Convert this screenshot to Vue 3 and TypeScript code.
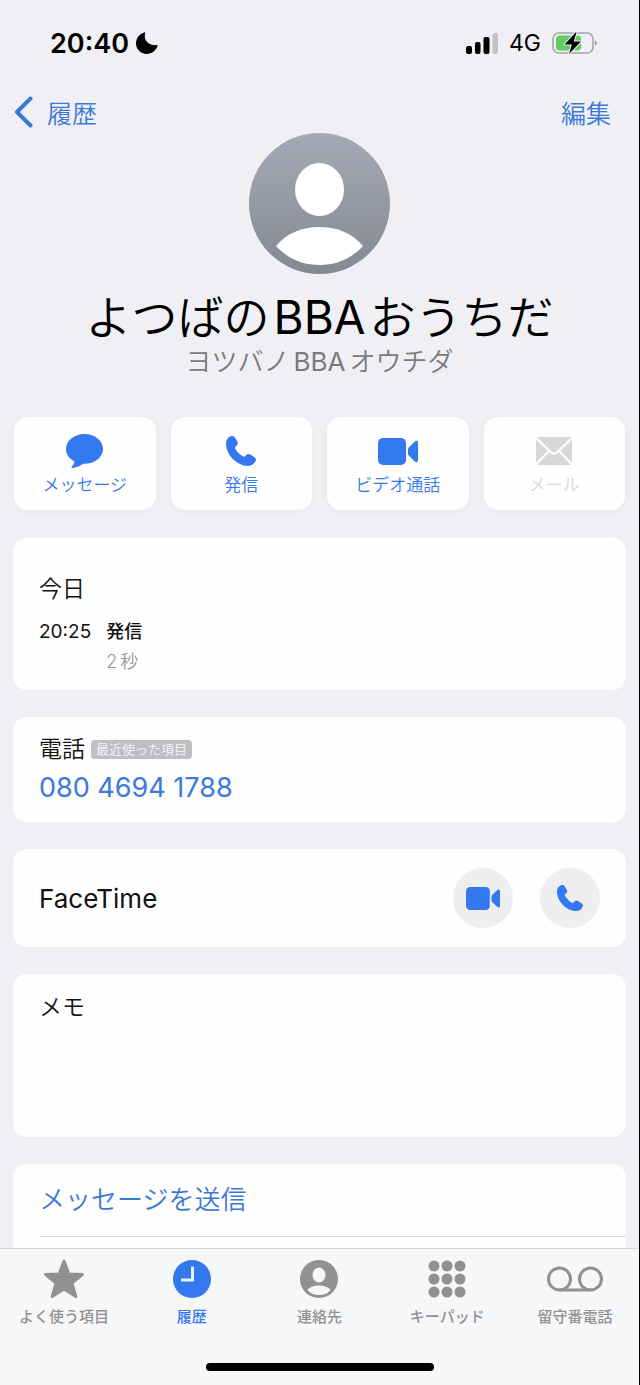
<script setup lang="ts">
import { ref } from 'vue'

type IconName = 'message' | 'phone' | 'video' | 'mail'
type TabName = 'star' | 'clock' | 'person' | 'keypad' | 'voicemail'

interface Action { icon: IconName; label: string; disabled?: boolean }
interface Tab { icon: TabName; label: string }

const actions: Action[] = [
  { icon: 'message', label: 'メッセージ' },
  { icon: 'phone', label: '発信' },
  { icon: 'video', label: 'ビデオ通話' },
  { icon: 'mail', label: 'メール', disabled: true },
]

const tabs: Tab[] = [
  { icon: 'star', label: 'よく使う項目' },
  { icon: 'clock', label: '履歴' },
  { icon: 'person', label: '連絡先' },
  { icon: 'keypad', label: 'キーパッド' },
  { icon: 'voicemail', label: '留守番電話' },
]

const activeTab = ref<TabName>('clock')
const memo = ref('')
const keypadDots = [6, 19, 32]
const phonePath =
  'M4.8.3C6.700-.4 8.300.4 9.200 2l2.100 3.400c.9 1.500.7 2.900-.4 3.900L9.700 10.400c-.8.7-.9 1.400-.4 2.400 1.600 2.900 4.400 5.700 7.400 7.500 1 .6 1.800.5 2.500-.3l1.100-1.100c1.100-1.100 2.500-1.200 4-.3l3.800 2.500c1.600 1 2.200 2.300 1.500 4C28.300 28.200 25.600 30 22.300 30 10 29.500 .2 18.500 0 7.700-.1 4.300 1.800 1.400 4.800.3Z'
const wingPath = 'M30 11.500c0-1 .4-1.700 1-2.300l5.500-5.500c1.500-1.400 3.500-1 3.500 1v17.600c0 2-2 2.400-3.500 1L31 17.800c-.6-.6-1-1.300-1-2.300Z'
</script>

<template>
  <div class="screen">
    <div class="status">
      <div class="status-left">
        <span class="time">20:40</span>
        <svg width="22" height="22" viewBox="0 0 22 22" aria-hidden="true">
          <path d="M8.300.4c.6-.2 1 .3.8.9C7.400 7.500 12 14.300 20.600 13c.8-.1 1.200.4.900 1.100C19.800 18.800 15.700 22 10.800 22 4.800 22 0 17.300 0 11.300 0 6.300 3.500 1.700 8.300.4Z" fill="#000" />
        </svg>
      </div>
      <div class="status-right">
        <svg width="32" height="21" viewBox="0 0 32 21" aria-hidden="true">
          <rect x="0" y="13" width="6" height="8" rx="2" />
          <rect x="9" y="9" width="5.500" height="12" rx="2" />
          <rect x="17.500" y="4" width="6" height="17" rx="2" />
          <rect x="26.500" y="0" width="5.500" height="21" rx="2" fill="#c3c3c6" />
        </svg>
        <span class="network">4G</span>
        <svg width="45" height="24" viewBox="0 0 45 24" aria-hidden="true">
          <rect x="1" y="2" width="40" height="20" rx="6" fill="none" stroke="#a2a2a6" stroke-width="1.500" />
          <path d="M43 9.500c2.200 1 2.200 4 0 5Z" fill="#929296" />
          <rect x="4" y="4.500" width="25" height="15" rx="3.500" fill="#62cb61" />
          <path d="M23.500 1.500 12.500 13.500h7.300L17 23 29 10.500h-7.300L24.500 1.500Z" fill="#000" stroke="#f1f1f4" stroke-width="2" paint-order="stroke" stroke-linejoin="round" />
        </svg>
      </div>
    </div>

    <main class="content">
      <header class="head">
        <button type="button" class="nav back">
          <svg width="19" height="32" viewBox="0 0 19 32" fill="none" aria-hidden="true">
            <path d="M16.500 2.500 3 16l13.500 13.500" stroke="#3b79d8" stroke-width="4" stroke-linecap="round" stroke-linejoin="round" />
          </svg>
          <span>履歴</span>
        </button>
        <svg class="avatar" width="141" height="141" viewBox="0 0 141 141" aria-hidden="true">
          <defs>
            <linearGradient id="avatar-fill" x1="0" y1="0" x2="0" y2="1">
              <stop offset="0" stop-color="#a4aab5" />
              <stop offset="1" stop-color="#848993" />
            </linearGradient>
          </defs>
          <circle cx="70.500" cy="70.500" r="70.500" fill="url(#avatar-fill)" />
          <ellipse cx="70.500" cy="56.500" rx="24.500" ry="26.500" fill="#fff" />
          <path d="M27 113C38 100 53 94 70.500 94S103 100 114 113C103 125 88 132 70.500 132S38 125 27 113Z" fill="#fff" />
        </svg>
        <button type="button" class="nav edit">編集</button>
      </header>

      <h1 class="name">よつばの<span class="latin">BBA</span>おうちだ</h1>
      <p class="reading">ヨツバノ<span class="latin">BBA</span>オウチダ</p>

      <div class="actions">
        <button v-for="a in actions" :key="a.icon" type="button" class="action" :disabled="a.disabled">
          <span class="action-icon">
            <svg v-if="a.icon === 'message'" width="37" height="34" viewBox="0 0 37 34">
              <path d="M18.500 0C28.700 0 37 6.700 37 15s-8.300 14.800-18.500 14.800h-1.200C14 32.200 10.300 33.600 6.600 34c-1.200.1-1.500-.8-.8-1.600 1.600-1.700 2.600-3.200 2.600-5C3.300 24.800 0 20.200 0 15 0 6.700 8.300 0 18.500 0Z" fill="currentColor" />
            </svg>
            <svg v-else-if="a.icon === 'phone'" width="30" height="30" viewBox="0 0 30 30">
              <path :d="phonePath" fill="currentColor" />
            </svg>
            <svg v-else-if="a.icon === 'video'" width="40" height="27" viewBox="0 0 40 27">
              <rect width="28" height="27" rx="5" fill="currentColor" />
              <path :d="wingPath" fill="currentColor" />
            </svg>
            <svg v-else width="36" height="28" viewBox="0 0 36 28">
              <rect width="36" height="28" rx="2" fill="currentColor" />
              <path d="m0 1 15 14.300c2 1.900 4 1.900 6 0L36 1M0 27.500 13 14M36 27.500 23 14" fill="none" stroke="#fff" stroke-width="2" />
            </svg>
          </span>
          <span>{{ a.label }}</span>
        </button>
      </div>

      <section class="card history">
        <h2 class="label">今日</h2>
        <dl class="calls">
          <dt>20:25</dt>
          <dd class="kind">発信</dd>
          <dd class="duration"><span class="count">2</span>秒</dd>
        </dl>
      </section>

      <section class="card phone">
        <div class="phone-label">
          <h2 class="label">電話</h2>
          <span class="badge">最近使った項目</span>
        </div>
        <a class="number" href="tel:08046941788">080 4694 1788</a>
      </section>

      <section class="card facetime">
        <h2 class="facetime-label">FaceTime</h2>
        <button type="button" class="round" aria-label="FaceTimeビデオ">
          <svg width="34" height="23" viewBox="0 0 40 27">
            <rect width="28" height="27" rx="5" fill="currentColor" />
            <path :d="wingPath" fill="currentColor" />
          </svg>
        </button>
        <button type="button" class="round" aria-label="FaceTimeオーディオ">
          <svg width="26" height="26" viewBox="0 0 30 30">
            <path :d="phonePath" fill="currentColor" />
          </svg>
        </button>
      </section>

      <section class="card memo">
        <label class="label" for="memo">メモ</label>
        <textarea id="memo" v-model="memo"></textarea>
      </section>

      <section class="card links">
        <a class="link" href="#message">メッセージを送信</a>
      </section>
    </main>

    <nav class="tabbar">
      <div class="tabs">
        <button
          v-for="t in tabs"
          :key="t.icon"
          type="button"
          class="tab"
          :class="{ active: t.icon === activeTab }"
          @click="activeTab = t.icon"
        >
          <span class="tab-icon">
            <svg v-if="t.icon === 'star'" width="42" height="40" viewBox="0 0 42 40">
              <path d="M21 2 25.900 15 39.500 15.500 28.900 24 32.800 37.500 21 30 9.200 37.500 13.100 24 2.500 15.500 16.100 15Z" fill="currentColor" stroke="currentColor" stroke-width="3" stroke-linejoin="round" />
            </svg>
            <svg v-else-if="t.icon === 'clock'" width="38" height="38" viewBox="0 0 38 38">
              <circle cx="19" cy="19" r="19" fill="currentColor" />
              <path d="M19.500 6.500v13.500H8" fill="none" stroke="#e8f2ff" stroke-width="3" />
            </svg>
            <svg v-else-if="t.icon === 'person'" width="38" height="38" viewBox="0 0 38 38">
              <circle cx="19" cy="19" r="19" fill="currentColor" />
              <ellipse cx="19" cy="15" rx="6.500" ry="7.500" fill="#f6f6f7" />
              <path d="M7.500 30C9.500 27 13.500 25.500 19 25.500s9.500 1.500 11.500 4.500C28 33.500 24 35 19 35S10 33.500 7.500 30Z" fill="#f6f6f7" />
            </svg>
            <svg v-else-if="t.icon === 'keypad'" width="38" height="38" viewBox="0 0 38 38">
              <template v-for="y in keypadDots" :key="y">
                <circle v-for="x in keypadDots" :key="x" :cx="x" :cy="y" r="5.500" fill="currentColor" />
              </template>
            </svg>
            <svg v-else width="56" height="26" viewBox="0 0 56 26" fill="none" stroke="currentColor" stroke-width="3">
              <circle cx="12.500" cy="13" r="11" />
              <circle cx="43.500" cy="13" r="11" />
              <path d="M12.500 24h31" />
            </svg>
          </span>
          <span>{{ t.label }}</span>
        </button>
      </div>
      <div class="home-indicator"></div>
    </nav>
  </div>
</template>

<style>
body {
  margin: 0;
}
</style>

<style scoped>
.screen {
  display: flex;
  flex-direction: column;
  box-sizing: border-box;
  height: 100vh;
  border-right: 1px solid #000;
  background: #f0f0f4;
  color: #111;
  font-family: Inter, "Noto Sans CJK JP", sans-serif;
}

button {
  margin: 0;
  padding: 0;
  border: 0;
  background: none;
  font: inherit;
  color: inherit;
}

h1,
h2,
p,
dl,
dd {
  margin: 0;
  font-weight: 400;
}

a {
  text-decoration: none;
}

svg {
  display: block;
  flex: none;
}

.status {
  display: flex;
  flex: none;
  align-items: center;
  justify-content: space-between;
  height: 86px;
  padding: 0 42px 0 50px;
  color: #000;
}

.status-left,
.status-right {
  display: flex;
  align-items: center;
}

.status-left {
  gap: 7px;
}

.status-right {
  gap: 11px;
}

.time {
  font-size: 27px;
  font-weight: 600;
}

.network {
  font-size: 23px;
}

.content {
  flex: 1;
  min-height: 0;
  overflow: hidden;
  padding: 0 13px;
}

.head {
  display: grid;
  grid-template-columns: 1fr auto 1fr;
  align-items: start;
}

.nav {
  display: flex;
  align-items: center;
  height: 52px;
  color: #3b79d8;
  font-size: 25px;
  font-weight: 350;
}

.back {
  gap: 14px;
  padding-left: 1px;
}

.edit {
  justify-self: end;
  padding-right: 15px;
}

.avatar {
  margin-top: 47px;
}

.name {
  margin-top: 15px;
  color: #000;
  font-size: 46px;
  font-weight: 350;
  line-height: 56px;
  text-align: center;
}

.reading {
  color: #7b7b7f;
  font-size: 26px;
  font-weight: 350;
  line-height: 34px;
  text-align: center;
}

.latin {
  margin: 0 4px;
  font-weight: 400;
}

.actions {
  display: grid;
  grid-template-columns: repeat(4, 1fr);
  gap: 15px;
  margin: 38px 1px 28px;
}

.action {
  display: flex;
  flex-direction: column;
  align-items: center;
  gap: 3px;
  box-sizing: border-box;
  height: 93px;
  padding-top: 16px;
  border-radius: 14px;
  background: #fefefe;
  box-shadow: 0 2px 12px rgba(0, 0, 0, 0.03);
  color: #3478f0;
  font-size: 17px;
  font-weight: 350;
  line-height: 26px;
}

.action:disabled {
  color: #d8d8da;
}

.action-icon {
  display: flex;
  align-items: center;
  height: 36px;
}

.card {
  margin-bottom: 27px;
  border-radius: 14px;
  background: #fefefe;
}

.label {
  font-size: 23px;
  font-weight: 350;
  line-height: 32px;
}

.history {
  padding: 35px 26px 13px;
}

.calls {
  display: grid;
  grid-template-columns: auto 1fr;
  column-gap: 15px;
  margin-top: 12px;
  font-size: 18px;
  line-height: 30px;
}

.calls dt {
  font-size: 19px;
}

.kind {
  font-weight: 500;
}

.duration {
  grid-column: 2;
  color: #98989b;
  font-weight: 350;
}

.count {
  margin-right: 3px;
}

.phone {
  padding: 16px 26px 14px;
}

.phone-label {
  display: flex;
  align-items: center;
  gap: 6px;
  margin-bottom: 3px;
}

.badge {
  padding: 0 5px;
  border-radius: 4px;
  background: #bfbfc3;
  color: #f4f4f6;
  font-size: 13px;
  font-weight: 350;
  line-height: 19px;
}

.number {
  display: block;
  color: #3b79d8;
  font-size: 27px;
  line-height: 40px;
}

.facetime {
  display: flex;
  align-items: center;
  gap: 27px;
  padding: 19px 26px;
}

.facetime-label {
  flex: 1;
  font-size: 26px;
}

.round {
  display: flex;
  align-items: center;
  justify-content: center;
  width: 60px;
  height: 60px;
  border-radius: 50%;
  background: #eeeeef;
  color: #3478f0;
}

.memo {
  display: flex;
  flex-direction: column;
  padding: 17px 26px 14px;
}

.memo textarea {
  height: 100px;
  padding: 0;
  border: 0;
  outline: 0;
  background: none;
  color: inherit;
  font: inherit;
  font-size: 23px;
  resize: none;
}

.links {
  padding-left: 26px;
  padding-bottom: 72px;
}

.link {
  display: block;
  border-bottom: 1px solid #dcdcde;
  color: #3b79d8;
  font-size: 26px;
  font-weight: 350;
  line-height: 72px;
}

.tabbar {
  flex: none;
  border-top: 1px solid #d4d4d6;
  background: #f6f7f8;
}

.tabs {
  display: grid;
  grid-template-columns: repeat(5, 1fr);
  padding-top: 10px;
}

.tab {
  display: flex;
  flex-direction: column;
  align-items: center;
  gap: 7px;
  color: #919193;
  font-size: 15px;
  font-weight: 500;
  line-height: 22px;
}

.tab.active {
  color: #3478f0;
}

.tab-icon {
  display: flex;
  align-items: center;
  height: 40px;
}

.home-indicator {
  width: 228px;
  height: 8px;
  margin: 35px auto 14px;
  border-radius: 4px;
  background: #000;
}
</style>
